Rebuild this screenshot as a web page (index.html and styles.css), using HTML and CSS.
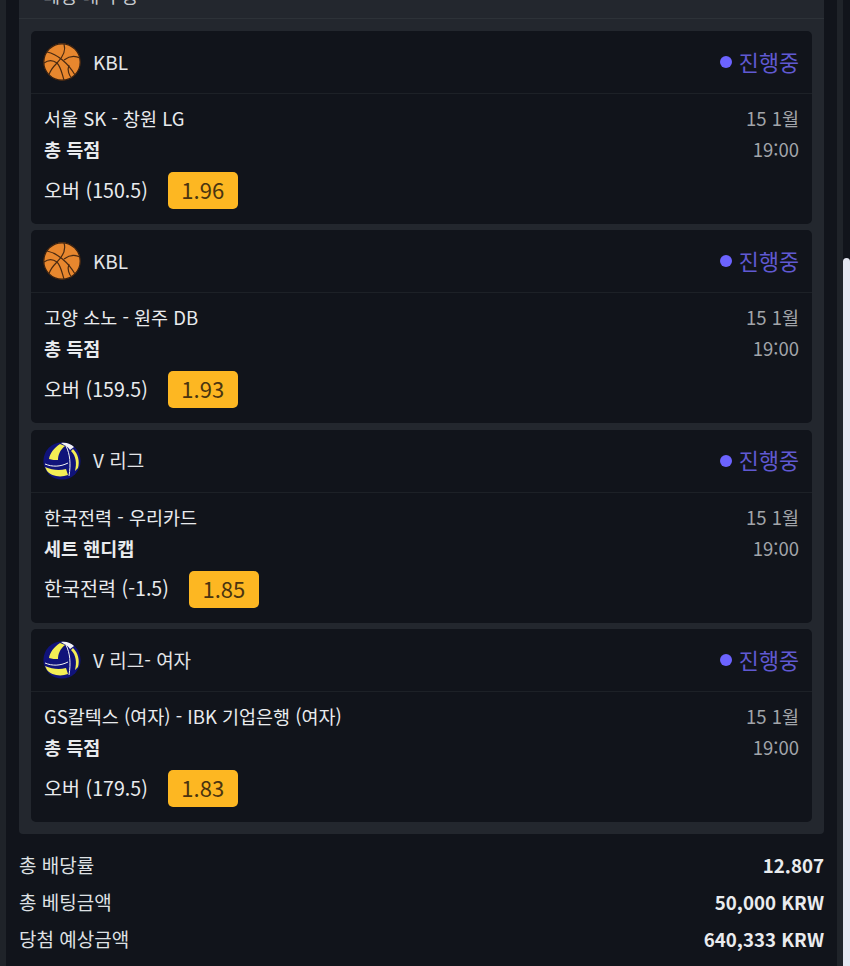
FILE: index.html
```html
<!DOCTYPE html>
<html lang="ko">
<head>
  <meta charset="UTF-8">
  <title>베팅 내역</title>
  <link rel="stylesheet" href="styles.css">
  <meta name="viewport" content="width=device-width, initial-scale=1.0">
</head>
<body>

<svg class="defs" width="0" height="0" aria-hidden="true">
  <symbol id="ball-basket" viewBox="0 0 38 38">
    <circle cx="19" cy="19" r="18.4" fill="#e8872e"/>
    <g fill="none" stroke="#4a2a12" stroke-width="1.2">
      <circle cx="19" cy="19" r="18.2" stroke="#3a2110"/>
      <path d="M4 9 C14 11 25 20 32 32"/>
      <path d="M21 1 C23 7 20 14 14 20 C10 24 7 28 6 32"/>
      <path d="M37 15 C31 12 25 14 21 17"/>
      <path d="M1 20 C5 17 10 17 14 20 C18 24 19 31 21 37"/>
      <path d="M26 22 C24 27 26 33 29 35"/>
    </g>
  </symbol>
  <symbol id="ball-volley" viewBox="0 0 38 38">
    <circle cx="19" cy="19" r="18.6" fill="#10137a"/>
    <path d="M6 17 C7 11 11 6 17 2 L22 4 C17 8 15 13 15 18 C12 18 9 18 6 17 Z" fill="#f3ee55"/>
    <path d="M2 25 C9 28 16 29 23 27 L25 33 C17 36 8 34 4 29 Z" fill="#f3ee55"/>
    <path d="M30 7 C35 12 37 19 35 26 L32 29 C34 21 33 14 28 9 Z" fill="#f3ee55"/>
    <path d="M18 1 C23 0 28 2 31 5 L27 8 C25 5 23 4 21 3 Z" fill="#f4f4f4"/>
    <g fill="none" stroke="#f4f4f4" stroke-width="1">
      <path d="M23 4 C27 12 28 22 26 34"/>
      <path d="M2 22 C9 25 17 25 25 21"/>
    </g>
  </symbol>
</svg>

<div class="edge edge-left"></div>
<div class="edge edge-right"></div>
<div class="scrollbar"></div>

<main class="page">
  <section class="panel">
    <div class="panel-head">베팅 내역 등</div>

    <article class="card">
      <header class="card-head">
        <svg class="league-icon"><use href="#ball-basket"/></svg>
        <span class="league">KBL</span>
        <span class="status"><i class="dot"></i>진행중</span>
      </header>
      <div class="card-body">
        <div class="row"><span>서울 SK - 창원 LG</span><span class="muted">15 1월</span></div>
        <div class="row"><strong>총 득점</strong><span class="muted">19:00</span></div>
        <div class="pick"><span class="pick-label">오버 (150.5)</span><span class="odds">1.96</span></div>
      </div>
    </article>

    <article class="card">
      <header class="card-head">
        <svg class="league-icon"><use href="#ball-basket"/></svg>
        <span class="league">KBL</span>
        <span class="status"><i class="dot"></i>진행중</span>
      </header>
      <div class="card-body">
        <div class="row"><span>고양 소노 - 원주 DB</span><span class="muted">15 1월</span></div>
        <div class="row"><strong>총 득점</strong><span class="muted">19:00</span></div>
        <div class="pick"><span class="pick-label">오버 (159.5)</span><span class="odds">1.93</span></div>
      </div>
    </article>

    <article class="card">
      <header class="card-head">
        <svg class="league-icon"><use href="#ball-volley"/></svg>
        <span class="league">V 리그</span>
        <span class="status"><i class="dot"></i>진행중</span>
      </header>
      <div class="card-body">
        <div class="row"><span>한국전력 - 우리카드</span><span class="muted">15 1월</span></div>
        <div class="row"><strong>세트 핸디캡</strong><span class="muted">19:00</span></div>
        <div class="pick"><span class="pick-label">한국전력 (-1.5)</span><span class="odds">1.85</span></div>
      </div>
    </article>

    <article class="card">
      <header class="card-head">
        <svg class="league-icon"><use href="#ball-volley"/></svg>
        <span class="league">V 리그- 여자</span>
        <span class="status"><i class="dot"></i>진행중</span>
      </header>
      <div class="card-body">
        <div class="row"><span>GS칼텍스 (여자) - IBK 기업은행 (여자)</span><span class="muted">15 1월</span></div>
        <div class="row"><strong>총 득점</strong><span class="muted">19:00</span></div>
        <div class="pick"><span class="pick-label">오버 (179.5)</span><span class="odds">1.83</span></div>
      </div>
    </article>
  </section>

  <dl class="totals">
    <div class="total"><dt>총 배당률</dt><dd>12.807</dd></div>
    <div class="total"><dt>총 베팅금액</dt><dd>50,000 KRW</dd></div>
    <div class="total"><dt>당첨 예상금액</dt><dd>640,333 KRW</dd></div>
  </dl>
</main>

</body>
</html>
```

FILE: styles.css
```css
html, body {
  margin: 0;
  height: 966px;
  overflow: hidden;
  background-color: #11141b;
  color: #e9ebee;
  font-family: "Noto Sans CJK KR", "Noto Sans", sans-serif;
  font-size: 18.5px;
}

.defs {
  display: block;
  height: 0;
}

.edge {
  position: absolute;
  top: 0;
  bottom: 0;
  width: 6px;
  background-color: #1f2329;
}

.edge-left {
  left: 0;
}

.edge-right {
  left: 837px;
}

.scrollbar {
  position: absolute;
  left: 843px;
  top: 258px;
  right: 0;
  bottom: 0;
  background-color: #e6e8f2;
  border-top-left-radius: 4px;
  border-top-right-radius: 4px;
}

.page {
  width: 805px;
  margin-left: 19px;
  margin-top: -19px;
}

.panel {
  background-color: #23272e;
  border-radius: 0 0 4px 4px;
  padding-bottom: 12px;
}

.panel-head {
  height: 38px;
  line-height: 28px;
  padding-left: 24px;
  box-sizing: border-box;
  border-bottom: 1px solid #2d3238;
  margin-bottom: 12px;
  color: #c9ccd0;
}

.card {
  margin: 0 12px 6.4px;
  background-color: #11141b;
  border-radius: 5px;
}

.card:last-child {
  margin-bottom: 0;
}

.card-head {
  display: flex;
  align-items: center;
  height: 62px;
  padding: 0 13px 0 12px;
  border-bottom: 1px solid #1d2127;
}

.league-icon {
  width: 38px;
  height: 38px;
  margin-right: 12px;
}

.league {
  color: #e3e5e8;
  font-size: 19px;
  padding-bottom: 2px;
}

.status {
  display: flex;
  align-items: center;
  margin-left: auto;
  padding-bottom: 2px;
  color: #6059d2;
  font-size: 21.8px;
}

.dot {
  width: 12px;
  height: 12px;
  margin-top: 2px;
  margin-right: 7px;
  border-radius: 50%;
  background-color: #6c63ff;
}

.card-body {
  padding: 10px 13px 15px;
}

.row {
  display: flex;
  justify-content: space-between;
  height: 31px;
  line-height: 29px;
}

.row strong {
  font-weight: 700;
}

.muted {
  color: #a2a5aa;
}

.pick {
  display: flex;
  align-items: center;
  gap: 20px;
  height: 37px;
  margin-top: 6px;
  font-size: 19.6px;
}

.pick-label {
  padding-bottom: 3px;
}

.odds {
  width: 70px;
  height: 37px;
  line-height: 35px;
  text-align: center;
  border-radius: 5px;
  background-color: #fdb722;
  color: #4a3410;
  font-size: 22px;
}

.totals {
  margin: 13.5px 0 0;
  font-size: 19px;
}

.total {
  display: flex;
  justify-content: space-between;
  height: 37px;
  line-height: 34px;
}

.total dt {
  color: #dfe1e4;
}

.total dd {
  margin: 0;
  font-weight: 700;
  font-size: 18.7px;
}
```
